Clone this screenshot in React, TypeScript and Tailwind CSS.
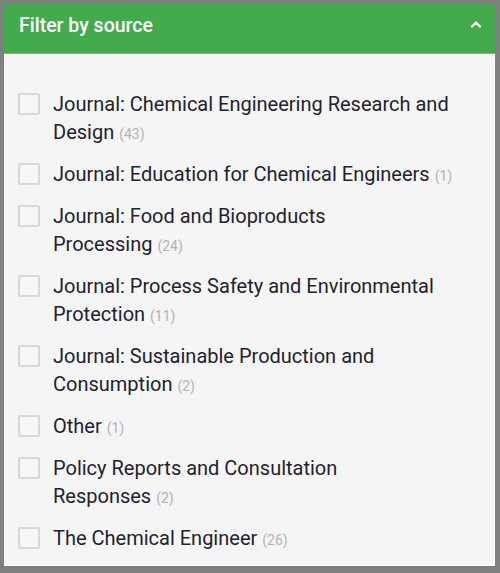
import React from "react";

const items: { label: string; count: number }[] = [
  { label: "Journal: Chemical Engineering Research and Design", count: 43 },
  { label: "Journal: Education for Chemical Engineers", count: 1 },
  { label: "Journal: Food and Bioproducts Processing", count: 24 },
  { label: "Journal: Process Safety and Environmental Protection", count: 11 },
  { label: "Journal: Sustainable Production and Consumption", count: 2 },
  { label: "Other", count: 1 },
  { label: "Policy Reports and Consultation Responses", count: 2 },
  { label: "The Chemical Engineer", count: 26 },
];

export default function App() {
  return (
    <div
      className="w-[500px] h-[573px] bg-[#7f7f7f] pt-[4px] pl-[4px] pr-[5px] pb-[7px] flex flex-col"
      style={{ fontFamily: "Roboto, 'Liberation Sans', sans-serif" }}
    >
      <div className="h-[50px] shrink-0 bg-[#44ab4c] border-b border-[#6cc373] flex items-center justify-between pl-[15px] pr-[13px] pb-[6px]">
        <span className="text-white text-[19.5px] font-medium leading-none">Filter by source</span>
        <svg width="12" height="8" viewBox="0 0 12 8" className="mb-[3px]">
          <path d="M2 6.5 L6 2.5 L10 6.5" fill="none" stroke="#ffffff" strokeWidth="2.2" strokeLinecap="round" strokeLinejoin="round" />
        </svg>
      </div>
      <div className="flex-1 bg-[#f5f5f5] border-x border-b border-white pt-[36px] pl-[13px] pr-[41px] flex flex-col gap-[14px]">
        {items.map((it) => (
          <div key={it.label} className="flex items-start gap-[13px]">
            <div className="w-[22px] h-[22px] shrink-0 mt-[3px] rounded-[2px] border-2 border-[#d8d8d8] bg-[#f7f7f7]" />
            <div className="text-[20px] leading-[28px] text-[#1f2230]">
              {it.label}
              {"\u00a0"}
              <span className="text-[14px] leading-[0] text-[#b3b3b3]">({it.count})</span>
            </div>
          </div>
        ))}
      </div>
    </div>
  );
}
